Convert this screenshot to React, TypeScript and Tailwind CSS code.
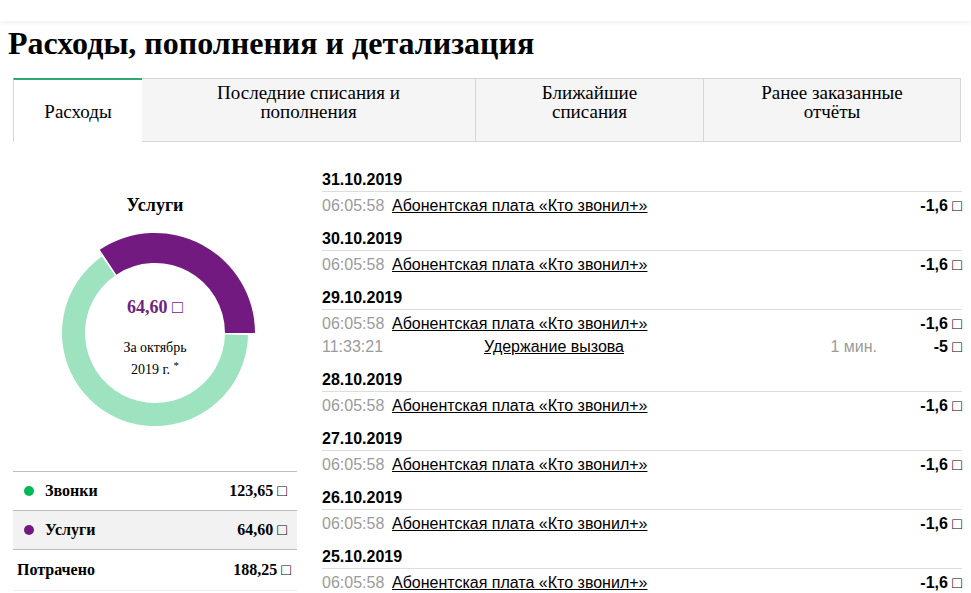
import React from 'react';

const serif = { fontFamily: '"Liberation Serif", "DejaVu Serif", serif' };
const sans = { fontFamily: '"Liberation Sans", "DejaVu Sans", sans-serif' };

const tabs = [
  { label: 'Расходы', width: 'w-[129px]', active: true },
  { label: 'Последние списания и\nпополнения', width: 'w-[334px]' },
  { label: 'Ближайшие\nсписания', width: 'w-[228px]' },
  { label: 'Ранее заказанные\nотчёты', width: 'flex-1' },
];

type Entry = { time: string; title: string; duration?: string; amount: string; call?: boolean };

const days: { date: string; entries: Entry[] }[] = [
  { date: '31.10.2019', entries: [{ time: '06:05:58', title: 'Абонентская плата «Кто звонил+»', amount: '-1,6' }] },
  { date: '30.10.2019', entries: [{ time: '06:05:58', title: 'Абонентская плата «Кто звонил+»', amount: '-1,6' }] },
  {
    date: '29.10.2019',
    entries: [
      { time: '06:05:58', title: 'Абонентская плата «Кто звонил+»', amount: '-1,6' },
      { time: '11:33:21', title: 'Удержание вызова', duration: '1 мин.', amount: '-5', call: true },
    ],
  },
  { date: '28.10.2019', entries: [{ time: '06:05:58', title: 'Абонентская плата «Кто звонил+»', amount: '-1,6' }] },
  { date: '27.10.2019', entries: [{ time: '06:05:58', title: 'Абонентская плата «Кто звонил+»', amount: '-1,6' }] },
  { date: '26.10.2019', entries: [{ time: '06:05:58', title: 'Абонентская плата «Кто звонил+»', amount: '-1,6' }] },
  { date: '25.10.2019', entries: [{ time: '06:05:58', title: 'Абонентская плата «Кто звонил+»', amount: '-1,6' }] },
];

// annular sector, angles in degrees, 0 = 3 o'clock, clockwise
function sector(cx: number, cy: number, r0: number, r1: number, a0: number, a1: number) {
  const rad = (a: number) => (a * Math.PI) / 180;
  const p = (r: number, a: number) => `${(cx + r * Math.cos(rad(a))).toFixed(2)} ${(cy + r * Math.sin(rad(a))).toFixed(2)}`;
  const large = a1 - a0 > 180 ? 1 : 0;
  return `M ${p(r1, a0)} A ${r1} ${r1} 0 ${large} 1 ${p(r1, a1)} L ${p(r0, a1)} A ${r0} ${r0} 0 ${large} 0 ${p(r0, a0)} Z`;
}

function Donut() {
  const share = (64.6 / 188.25) * 360;
  return (
    <div className="relative w-[210px] h-[210px] mt-[12px]">
      <svg width="210" height="210" viewBox="0 0 210 210">
        <path d={sector(105, 105, 70, 93, 1.2, 360 - share - 1.2)} fill="#9de3bf" />
        <path d={sector(105, 105, 70, 100, -share, 0)} fill="#731a80" />
      </svg>
      <div className="absolute inset-0 flex flex-col items-center text-black" style={serif}>
        <div className="mt-[68px] text-[18px] leading-[22px] font-bold text-[#6f2580]">64,60 □</div>
        <div className="mt-[19px] text-[14px] leading-[22px]">За октябрь</div>
        <div className="text-[14px] leading-[22px]">
          2019 г. <sup className="text-[11px]">*</sup>
        </div>
      </div>
    </div>
  );
}

function Legend() {
  return (
    <div className="w-full mt-[33px] text-black" style={serif}>
      <div className="h-[39px] border-t border-[#bdbdbd] flex items-center pl-[11px] pr-[10px]">
        <span className="w-[10px] h-[10px] rounded-full bg-[#00b956]" />
        <span className="ml-[11px] text-[16px] font-bold">Звонки</span>
        <span className="ml-auto text-[16px] font-bold">123,65 □</span>
      </div>
      <div className="h-[39px] border-t border-[#bdbdbd] bg-[#f2f2f2] flex items-center pl-[11px] pr-[10px]">
        <span className="w-[10px] h-[10px] rounded-full bg-[#731a80]" />
        <span className="ml-[11px] text-[16px] font-bold">Услуги</span>
        <span className="ml-auto text-[16px] font-bold">64,60 □</span>
      </div>
      <div className="h-[42px] border-t border-b border-t-[#bdbdbd] border-b-[#eeeeee] flex items-center pl-[4px] pr-[6px]">
        <span className="text-[16px] font-bold">Потрачено</span>
        <span className="ml-auto text-[16px] font-bold">188,25 □</span>
      </div>
    </div>
  );
}

export default function App() {
  return (
    <div className="w-[971px] h-[593px] overflow-hidden bg-white">
      <div className="h-[21px] bg-white shadow-[0_2px_5px_rgba(0,0,0,0.06)]" />

      <h1 className="pl-[8px] mt-[5px] text-[32px] leading-[34px] font-bold text-black" style={serif}>
        Расходы, пополнения и детализация
      </h1>

      {/* Tabs */}
      <div className="ml-[13px] w-[948px] mt-[18px] flex h-[64px]" style={serif}>
        {tabs.map((t, i) =>
          t.active ? (
            <div
              key={i}
              className={`${t.width} border-l border-[#d6d6d6] border-t-2 border-t-[#2eaa6e] bg-white text-center text-[19px] leading-[19px] pt-[22px] text-black`}
            >
              {t.label}
            </div>
          ) : (
            <div
              key={i}
              className={`${t.width} border border-l-0 border-[#d6d6d6] bg-[#f5f5f5] text-center text-[19px] leading-[19px] pt-[4px] whitespace-pre-line text-black`}
            >
              {t.label}
            </div>
          )
        )}
      </div>

      <div className="flex ml-[13px]">
        {/* Left column */}
        <div className="w-[284px] flex flex-col items-center pt-[52px]">
          <div className="text-[18px] leading-[22px] font-bold text-black" style={serif}>
            Услуги
          </div>
          <Donut />
          <Legend />
        </div>

        {/* Right column */}
        <div className="w-[640px] ml-[25px] pt-[27px]" style={sans}>
          {days.map((d) => (
            <div key={d.date} className="mb-[11px]">
              <div className="h-[22px] leading-[22px] text-[16px] font-bold text-black border-b border-[#dddddd] box-content">
                {d.date}
              </div>
              <div className="pt-[2px]">
                {d.entries.map((e, j) => (
                  <div key={j} className="flex h-[23px] items-center text-[16px] leading-[23px]">
                    <span className="w-[70px] text-[#9b9b9b]">{e.time}</span>
                    {e.call ? (
                      <>
                        <span className="w-[324px] text-center">
                          <span className="underline text-black">{e.title}</span>
                        </span>
                        <span className="flex-1 text-right text-[#9b9b9b]">{e.duration}</span>
                        <span className="w-[85px] text-right font-bold text-black">{e.amount} □</span>
                      </>
                    ) : (
                      <>
                        <span className="underline text-black">{e.title}</span>
                        <span className="ml-auto font-bold text-black">{e.amount} □</span>
                      </>
                    )}
                  </div>
                ))}
              </div>
            </div>
          ))}
        </div>
      </div>
    </div>
  );
}
